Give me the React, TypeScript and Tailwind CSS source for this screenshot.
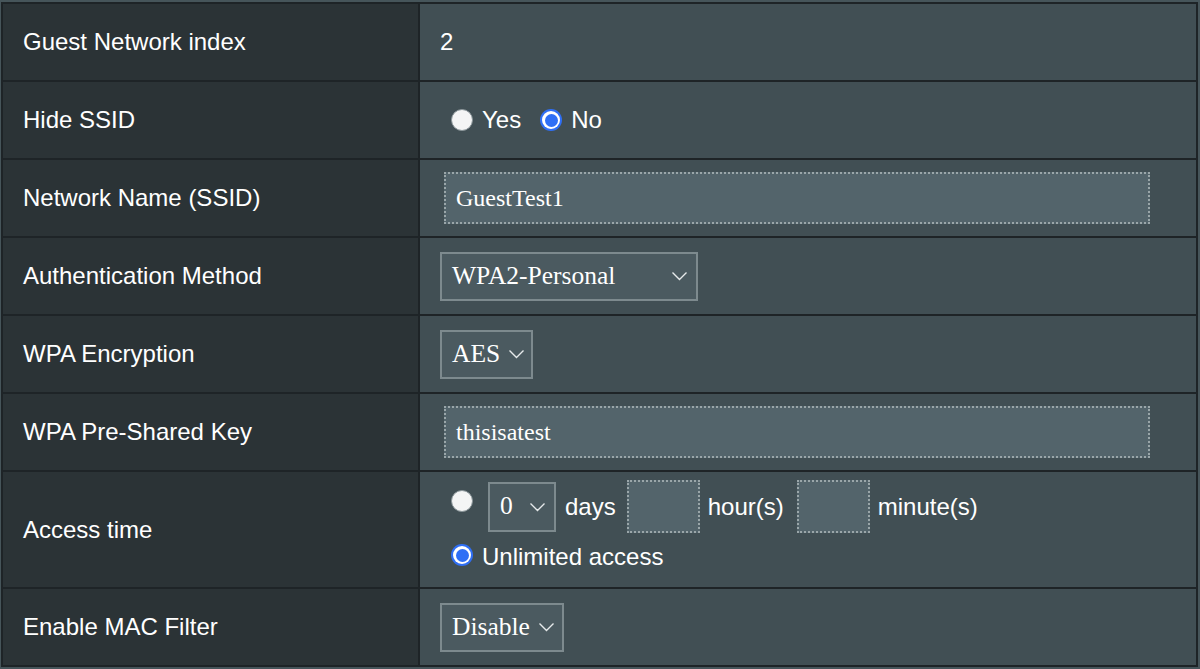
import React from "react";

const sans = { fontFamily: '"Liberation Sans", Arial, sans-serif' };
const serif = { fontFamily: '"Liberation Serif", "Times New Roman", serif' };

function Radio({ checked }: { checked?: boolean }) {
  return checked ? (
    <span className="w-[22px] h-[22px] rounded-full bg-[#2f6ff5] flex items-center justify-center shrink-0">
      <span className="w-[18px] h-[18px] rounded-full bg-white flex items-center justify-center">
        <span className="block w-[13px] h-[13px] rounded-full bg-[#2f6ff5]" />
      </span>
    </span>
  ) : (
    <span className="inline-block w-[22px] h-[22px] rounded-full bg-[#f4f5f5] border border-[#8a9599] shrink-0" />
  );
}

function Chevron() {
  return (
    <svg width="17" height="10" viewBox="0 0 17 10" className="shrink-0">
      <path d="M1.5 1.5 L8.5 8.5 L15.5 1.5" fill="none" stroke="#e6eaeb" strokeWidth="1.4" />
    </svg>
  );
}

function Select({ label, w, h = 49 }: { label: string; w: number; h?: number }) {
  return (
    <div
      className="flex items-center pl-[10px] pr-[8px] bg-[#4b5a60] border-[2px] border-[#7d8a8e] text-white text-[25.5px]"
      style={{ width: w, height: h, ...serif }}
    >
      <span>{label}</span>
      <span className="flex-1 min-w-[8px]" />
      <Chevron />
    </div>
  );
}

function Row({
  label,
  h = 77,
  top,
  children,
}: {
  label: string;
  h?: number;
  top?: boolean;
  children: React.ReactNode;
}) {
  return (
    <div className="flex border-b-[2px] border-[#1e2427]" style={{ height: h + 1 }}>
      <div
        className="w-[417px] shrink-0 bg-[#2b3336] border-r-[2px] border-[#1e2427] flex items-center pl-[20px] text-white text-[24px]"
        style={sans}
      >
        {label}
      </div>
      <div
        className={
          top
            ? "flex-1 bg-[#414f54] flex items-start pl-[20px] pt-[8px]"
            : "flex-1 bg-[#414f54] flex items-center pl-[20px]"
        }
      >
        {children}
      </div>
    </div>
  );
}

function TextInput({ value }: { value: string }) {
  return (
    <div
      className="w-[706px] h-[52px] ml-[4px] bg-[#53646b] border-[2px] border-dotted border-[#9aa6a9] flex items-center pl-[10px] text-white text-[24px]"
      style={serif}
    >
      {value}
    </div>
  );
}

export default function App() {
  return (
    <div className="w-[1200px] h-[669px] bg-[#46555a] pt-[2px] pl-[1px] overflow-hidden">
      <div className="w-[1197px] border-[2px] border-b-0 border-[#1e2427]">
        <Row label="Guest Network index">
          <span className="text-white text-[24px]" style={sans}>2</span>
        </Row>
        <Row label="Hide SSID">
          <div className="flex items-center text-white text-[24px] ml-[11px]" style={sans}>
            <Radio />
            <span className="ml-[9px]">Yes</span>
            <span className="ml-[19px]"><Radio checked /></span>
            <span className="ml-[9px]">No</span>
          </div>
        </Row>
        <Row label="Network Name (SSID)">
          <TextInput value="GuestTest1" />
        </Row>
        <Row label="Authentication Method">
          <Select label="WPA2-Personal" w={258} />
        </Row>
        <Row label="WPA Encryption">
          <Select label="AES" w={93} />
        </Row>
        <Row label="WPA Pre-Shared Key">
          <TextInput value="thisisatest" />
        </Row>
        <Row label="Access time" h={116} top>
          <div className="flex flex-col text-white text-[24px] ml-[11px]" style={sans}>
            <div className="flex items-center h-[53px]">
              <span className="mt-[-6px]"><Radio /></span>
              <span className="ml-[15px]"><Select label="0" w={68} h={50} /></span>
              <span className="ml-[9px]">days</span>
              <span className="ml-[11px] w-[73px] h-[53px] bg-[#53646b] border-[2px] border-dotted border-[#9aa6a9] inline-block" />
              <span className="ml-[8px]">hour(s)</span>
              <span className="ml-[13px] w-[73px] h-[53px] bg-[#53646b] border-[2px] border-dotted border-[#9aa6a9] inline-block" />
              <span className="ml-[8px]">minute(s)</span>
            </div>
            <div className="flex items-center mt-[6px]">
              <span className="mt-[-4px]"><Radio checked /></span>
              <span className="ml-[9px]">Unlimited access</span>
            </div>
          </div>
        </Row>
        <Row label="Enable MAC Filter">
          <Select label="Disable" w={124} />
        </Row>
      </div>
    </div>
  );
}
